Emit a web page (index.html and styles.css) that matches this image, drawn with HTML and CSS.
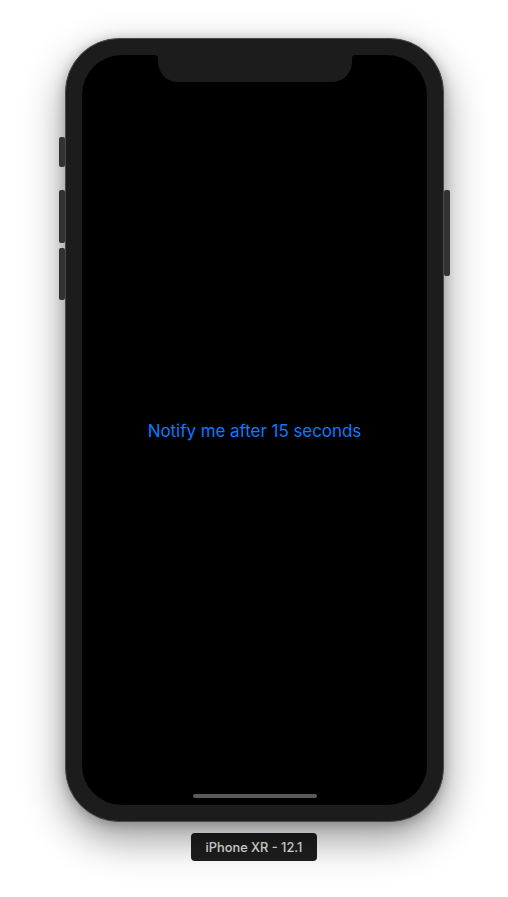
FILE: index.html
```html
<!DOCTYPE html>
<html lang="en">
<head>
<meta charset="utf-8">
<title>iPhone XR - 12.1</title>
<link rel="stylesheet" href="styles.css">
</head>
<body>
<div class="stage">
  <div class="phone">
    <span class="btn btn-mute"></span>
    <span class="btn btn-vol-up"></span>
    <span class="btn btn-vol-down"></span>
    <span class="btn btn-power"></span>
    <div class="screen">
      <div class="notch"></div>
      <div class="notify">Notify me after 15 seconds</div>
      <div class="home-indicator"></div>
    </div>
  </div>
  <div class="device-label">iPhone XR - 12.1</div>
</div>
</body>
</html>
```

FILE: styles.css
```css
html, body {
  margin: 0;
  padding: 0;
  background: #ffffff;
}
body {
  width: 508px;
  height: 897px;
  overflow: hidden;
  font-family: Inter, "Noto Sans", sans-serif;
}
.stage {
  display: flex;
  flex-direction: column;
  align-items: center;
  padding-top: 38px;
}
.phone {
  position: relative;
  box-sizing: border-box;
  width: 379px;
  height: 784px;
  padding: 16px;
  border: 1px solid #4a4a4a;
  border-radius: 54px;
  background: #1c1c1c;
  box-shadow: 0 16px 40px rgba(0,0,0,0.42), 0 2px 12px rgba(0,0,0,0.22);
  margin-left: 1px;
}
.btn {
  position: absolute;
  width: 6px;
  background: #323232;
  border-radius: 2px;
}
.btn-mute { left: -7px; top: 98px; height: 30px; }
.btn-vol-up { left: -7px; top: 151px; height: 53px; }
.btn-vol-down { left: -7px; top: 209px; height: 52px; }
.btn-power { right: -7px; top: 151px; height: 86px; }
.screen {
  position: relative;
  height: 100%;
  background: #000;
  border-radius: 40px;
  display: flex;
  align-items: center;
  justify-content: center;
  overflow: hidden;
}
.notch {
  position: absolute;
  top: 0;
  left: 76px;
  width: 194px;
  height: 27px;
  background: #1c1c1c;
  border-radius: 0 0 20px 20px;
}
.notch::before, .notch::after {
  content: "";
  position: absolute;
  top: 0;
  width: 4px;
  height: 4px;
}
.notch::before {
  left: -4px;
  background: radial-gradient(circle at 0 100%, transparent 4px, #1c1c1c 4.5px);
}
.notch::after {
  right: -4px;
  background: radial-gradient(circle at 100% 100%, transparent 4px, #1c1c1c 4.5px);
}
.notify {
  color: #0a7aff;
  font-size: 17px;
  letter-spacing: -0.05px;
  margin-top: 1px;
}
.home-indicator {
  position: absolute;
  bottom: 7px;
  left: 50%;
  margin-left: -62px;
  width: 124px;
  height: 4px;
  border-radius: 2px;
  background: #5a5a5a;
}
.device-label {
  margin-top: 11px;
  box-sizing: border-box;
  width: 126px;
  height: 28px;
  display: flex;
  align-items: center;
  justify-content: center;
  background: #1e1e1e;
  border-radius: 4px;
  color: #e4e4e4;
  font-size: 12.8px;
  font-weight: 500;
}
```
